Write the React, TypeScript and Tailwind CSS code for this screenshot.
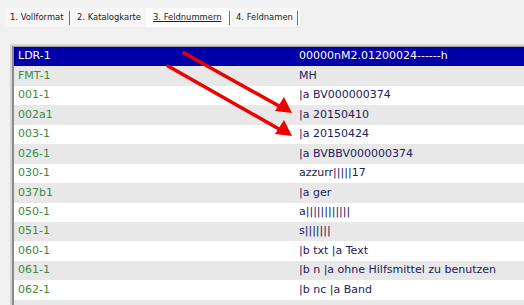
import React from "react";

const rows: [string, string][] = [
  ["LDR-1", "00000nM2.01200024------h"],
  ["FMT-1", "MH"],
  ["001-1", "|a BV000000374"],
  ["002a1", "|a 20150410"],
  ["003-1", "|a 20150424"],
  ["026-1", "|a BVBBV000000374"],
  ["030-1", "azzurr|||||17"],
  ["037b1", "|a ger"],
  ["050-1", "a||||||||||||"],
  ["051-1", "s|||||||"],
  ["060-1", "|b txt |a Text"],
  ["061-1", "|b n |a ohne Hilfsmittel zu benutzen"],
  ["062-1", "|b nc |a Band"],
  ["", ""],
];

export default function App() {
  return (
    <div
      className="relative w-[524px] h-[305px] overflow-hidden bg-[#f0f0f0]"
      style={{ fontFamily: '"DejaVu Sans", Verdana, sans-serif' }}
    >
      {/* tabs */}
      <div className="pt-[8px] pl-[5px]">
        <div className="flex w-[295px] h-[19px] items-center bg-[#f6f6f6] text-[8.4px] text-[#222]">
          <div className="w-[64px] pl-[5px]">1. Vollformat</div>
          <div className="w-[1px] h-[14px] bg-[#707070] border-r border-white box-content" />
          <div className="w-[75px] pl-[6px]">2. Katalogkarte</div>
          <div className="w-[83px] h-full flex items-center pl-[7px] bg-[#fcfcfc]">
            <span className="underline">3. Feldnummern</span>
          </div>
          <div className="w-[1px] h-[14px] bg-[#707070] border-r border-white box-content" />
          <div className="w-[66px] pl-[5px]">4. Feldnamen</div>
          <div className="w-[1px] h-[14px] bg-[#707070] border-r border-white box-content" />
        </div>
      </div>

      {/* table */}
      <div className="mt-[17px] ml-[10px] border-l-2 border-t-2 border-l-[#d4d4d4] border-t-[#d8d8d8]">
        <div className="border-l-2 border-t border-l-[#8a8a8a] border-t-[#a0a0a0]">
          {rows.map(([k, v], i) => {
            const sel = i === 0;
            const bg = sel ? "bg-[#0000a8]" : i % 2 === 1 ? "bg-[#e8e8e8]" : "bg-white";
            return (
              <div key={i} className={`flex h-[19.45px] items-center text-[11px] ${bg}`}>
                <div className={`w-[285px] pl-[4px] ${sel ? "text-white" : "text-[#3c8a3c]"}`}>{k}</div>
                <div className={`${sel ? "text-white" : "text-[#202060]"} whitespace-pre`}>{v}</div>
              </div>
            );
          })}
        </div>
      </div>

      {/* red arrows */}
      <svg className="absolute left-0 top-0" width="524" height="305" viewBox="0 0 524 305">
        <line x1="184" y1="53" x2="279" y2="106" stroke="#ee0000" strokeWidth="3.5" strokeLinecap="round" />
        <polygon points="292,113 275,111 284,97" fill="#ee0000" />
        <line x1="168" y1="66" x2="279" y2="129" stroke="#ee0000" strokeWidth="3.5" strokeLinecap="round" />
        <polygon points="292,136 275,134 284,120" fill="#ee0000" />
      </svg>
    </div>
  );
}
